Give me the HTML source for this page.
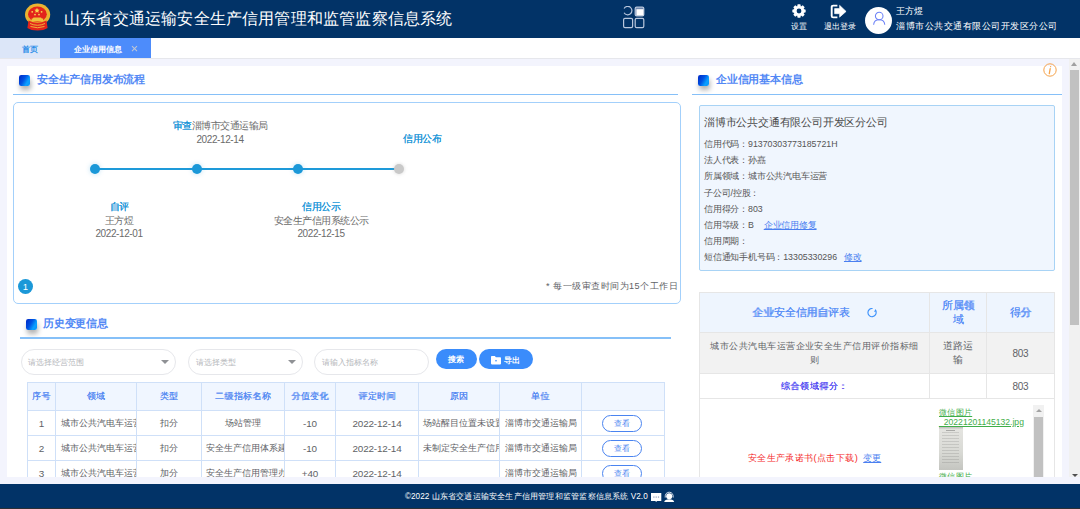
<!DOCTYPE html>
<html><head><meta charset="utf-8">
<style>
*{margin:0;padding:0;box-sizing:border-box}
html,body{width:1080px;height:509px;overflow:hidden;background:#f3f4fd;font-family:"Liberation Sans",sans-serif;color:#606266}
.a{position:absolute;white-space:nowrap}
#hdr{position:absolute;left:0;top:0;width:1080px;height:38px;background:#023367}
#tabs{position:absolute;left:0;top:38px;width:1080px;height:21px;background:#fff;border-bottom:1px solid #e6e7ec}
#ftr{position:absolute;left:0;top:484px;width:1080px;height:25px;background:#023367}
.card{position:absolute;background:#fff}
.ttl{position:absolute;font-size:11px;letter-spacing:-0.2px;color:#5288f5;line-height:12px;font-weight:bold}
.ico{position:absolute;width:11px;height:11px;border-radius:2.2px;background:linear-gradient(120deg,#0026c4 0%,#0052e2 42%,#0aa0ff 72%,#0a90f8 100%);box-shadow:1px 4px 5px rgba(0,0,0,.3)}
.uline{position:absolute;height:1.5px;background:#86c0f8}
.dot{position:absolute;width:10px;height:10px;border-radius:50%;background:#1b98d8;box-shadow:0 0 4px 1px rgba(27,150,216,.18)}
.stp{position:absolute;font-size:9.5px;letter-spacing:-0.5px;line-height:13.5px;text-align:center;width:120px;color:#6b6b6b;margin-top:0.2px}
.stp b{color:#1b96d8;font-weight:normal;text-shadow:0.4px 0 0 #1b96d8}
.stp .d{letter-spacing:-0.4px;font-size:10px}
.sel{position:absolute;height:25.5px;border:1px solid #e6e7eb;border-radius:13px;background:#fff}
.ph{position:absolute;font-size:8px;color:#b4b6ba;line-height:10px;margin-top:1px}
.arr{position:absolute;width:0;height:0;border-left:4.5px solid transparent;border-right:4.5px solid transparent;border-top:4.5px solid #8f9195}
.btn{position:absolute;height:20px;border-radius:10px;background:#3a8cfb;color:#fff;font-size:8.3px;line-height:20px;font-weight:bold}
table{border-collapse:collapse;table-layout:fixed}
#t1{position:absolute;left:27px;top:382px;width:637px}
#t1 td,#t1 th{border:1px solid #cfe0f8;font-size:9.4px;text-align:center;overflow:hidden;white-space:nowrap;color:#606266;font-weight:normal;padding:0}
#t1 th{background:#f0f6ff;color:#5288f2;font-weight:normal;text-shadow:0.35px 0 0 #5288f2;font-size:9.3px;letter-spacing:0.4px;height:28px}
#t1 td{height:25px;padding-top:1px}
#t1 td.dg{font-size:9.9px;letter-spacing:-0.15px}
.vbtn{position:relative;left:-1.5px;display:inline-block;width:40px;height:17px;border:1px solid #4a84f0;border-radius:9px;color:#4a84f0;font-size:8px;line-height:15px;vertical-align:middle}
.info{position:absolute;left:699px;top:105px;width:356px;height:166px;background:#f0f6fe;border:1px solid #a8d3f5;border-radius:2px}
.il{position:absolute;left:704px;font-size:9px;letter-spacing:-0.2px;line-height:10px;color:#555}
.lnk{color:#4a7ff0;text-decoration:underline}
.n{font-size:8.8px;letter-spacing:0}
#t2{position:absolute;left:699px;top:292px;width:355px}
#t2 td,#t2 th{border:1px solid #e6e6e6;text-align:center;padding:0;font-weight:normal;overflow:hidden}
#t2 th{background:#eef5fe;color:#5a90f7;font-size:11px;letter-spacing:-0.1px;font-weight:normal;text-shadow:0.35px 0 0 #5a90f7;line-height:13.5px}
</style></head><body>
<div id="hdr">
  <svg class="a" style="left:20px;top:0px" width="36" height="36" viewBox="0 0 36 36">
    <ellipse cx="17.6" cy="14.5" rx="12.6" ry="11" fill="#e9b431"/>
    
    <ellipse cx="17.4" cy="14.2" rx="9.4" ry="7.6" fill="#e3241b"/>
    <path d="M17 7.8 L17.8 9.6 L19.6 9.8 L18.3 11 L18.7 12.8 L17 11.9 L15.3 12.8 L15.7 11 L14.4 9.8 L16.2 9.6Z" fill="#f7d650"/>
    <circle cx="12.2" cy="11.8" r=".9" fill="#f7d650"/><circle cx="21.6" cy="11.8" r=".9" fill="#f7d650"/>
    <circle cx="15" cy="14.6" r=".9" fill="#f7d650"/><circle cx="19" cy="14.6" r=".9" fill="#f7d650"/>
    <path d="M13.5 17.4 H21 L21.8 18.6 H23.2 V21.2 H11.6 V18.6 H12.7Z" fill="#f0c23c"/>
    <path d="M8.5 20.5 Q17.5 25 26.5 20.5 L27.6 28 Q24 30.5 17.5 30.5 Q11 30.5 7.4 28Z" fill="#e3241b"/>
    <path d="M10 23.5 Q17.5 27 25 23.5 M10.5 26.5 Q17.5 29 24.5 26.5" fill="none" stroke="#f0c23c" stroke-width=".9"/>
  </svg>
  <div class="a" style="left:64px;top:8.5px;font-size:16px;letter-spacing:0.19px;line-height:20px;color:#fff">山东省交通运输安全生产信用管理和监管监察信息系统</div>
  <svg class="a" style="left:623px;top:6px" width="22" height="23" viewBox="0 0 22 23" fill="none" stroke="#b9c7dd" stroke-width="1.2">
    <path d="M1.1 6.7 A4.2 4.2 0 1 0 1.1 2.5"/>
    <rect x="12.2" y="1.2" width="8.6" height="8.6" rx="1.4" fill="#6f87ad"/>
    <rect x="13.4" y="3.2" width="7" height="6.2" fill="#fff" stroke="none"/>
    <rect x="0.6" y="12.4" width="9" height="9.2" rx="1.4"/>
    <rect x="12.2" y="12.4" width="8.6" height="9.2" rx="1.4"/>
  </svg>
  <svg class="a" style="left:791.5px;top:4.3px" width="14" height="14" viewBox="0 0 14 14"><path fill="#fff" fill-rule="evenodd" d="M5.10 2.38 L5.65 0.34 L8.35 0.34 L8.90 2.38 L8.93 2.39 L10.76 1.33 L12.67 3.24 L11.61 5.07 L11.62 5.10 L13.66 5.65 L13.66 8.35 L11.62 8.90 L11.61 8.93 L12.67 10.76 L10.76 12.67 L8.93 11.61 L8.90 11.62 L8.35 13.66 L5.65 13.66 L5.10 11.62 L5.07 11.61 L3.24 12.67 L1.33 10.76 L2.39 8.93 L2.38 8.90 L0.34 8.35 L0.34 5.65 L2.38 5.10 L2.39 5.07 L1.33 3.24 L3.24 1.33 L5.07 2.39Z M7 4.6 A2.4 2.4 0 1 0 7 9.4 A2.4 2.4 0 1 0 7 4.6Z"/></svg>
  <div class="a" style="left:791px;top:22px;font-size:8.2px;line-height:10px;color:#fff">设置</div>
  <svg class="a" style="left:830px;top:4px" width="17" height="15" viewBox="0 0 17 15">
    <path d="M7.4 1.6 H3.2 Q1.7 1.6 1.7 3.1 V11.9 Q1.7 13.4 3.2 13.4 H7.4" fill="none" stroke="#fff" stroke-width="1.9"/>
    <path d="M4.6 4.6 H9.6 V1.3 L16.1 7.4 L9.6 13.2 V9.7 H4.6Z" fill="#fff" stroke="#fff" stroke-width=".6" stroke-linejoin="round"/>
  </svg>
  <div class="a" style="left:824px;top:22px;font-size:8.2px;line-height:10px;color:#fff">退出登录</div>
  <div class="a" style="left:865px;top:7px;width:27px;height:27px;border-radius:50%;background:#fff"></div>
  <svg class="a" style="left:871px;top:11px" width="16" height="16" viewBox="0 0 16 16" fill="none" stroke="#6c82f7" stroke-width="1.05">
    <circle cx="8.2" cy="5" r="3.8"/>
    <path d="M2.6 13.7 Q3.1 8.8 8.2 8.8 Q13.3 8.8 13.8 13.7"/>
  </svg>
  <div class="a" style="left:896px;top:5px;font-size:9.4px;line-height:11px;color:#fff">王方煜</div>
  <div class="a" style="left:896px;top:20px;font-size:9.4px;letter-spacing:0.5px;line-height:11px;color:#fff">淄博市公共交通有限公司开发区分公司</div>
</div>
<div id="tabs">
  <div class="a" style="left:0;top:0;width:60px;height:20px;background:#dce6f8"></div>
  <div class="a" style="left:22px;top:7px;font-size:8px;line-height:10px;color:#2a8ce8;font-weight:bold">首页</div>
  <div class="a" style="left:60px;top:0;width:91px;height:20px;background:#4d8cfb"></div>
  <div class="a" style="left:74px;top:7px;font-size:8px;line-height:10px;color:#fff;font-weight:bold">企业信用信息</div>
  <svg class="a" style="left:131px;top:7px" width="7" height="7" viewBox="0 0 7 7"><path d="M1 1.2 L6 6.2 M6 1.2 L1 6.2" stroke="#bfc6d4" stroke-width="1.05"/></svg>
</div>
<div class="card" style="left:7px;top:65.5px;width:1055px;height:411.5px"></div>

<!-- left section 1 -->
<div class="ico" style="left:19px;top:75px"></div>
<div class="ttl" style="left:37px;top:73px">安全生产信用发布流程</div>
<div class="uline" style="left:13px;top:93.5px;width:665px"></div>
<div class="a" style="left:13.3px;top:101.5px;width:667.7px;height:202px;border:1.9px solid #a3d0fb;border-radius:5px"></div>
<div class="a" style="left:95px;top:168.4px;width:303px;height:1.8px;background:#1e9ad9"></div>
<div class="dot" style="left:90px;top:164.3px"></div>
<div class="dot" style="left:191.5px;top:164.3px"></div>
<div class="dot" style="left:292.7px;top:164.3px"></div>
<div class="dot" style="left:393.7px;top:164.3px;background:#c9c9c9;box-shadow:0 0 3px 1px rgba(150,150,150,.2)"></div>
<div class="stp" style="left:160px;top:119px"><b>审查</b>淄博市交通运输局<br><span class="d">2022-12-14</span></div>
<div class="stp" style="left:362px;top:132px"><b>信用公布</b></div>
<div class="stp" style="left:59px;top:200px"><b>自评</b><br>王方煜<br><span class="d">2022-12-01</span></div>
<div class="stp" style="left:261px;top:200px"><b>信用公示</b><br>安全生产信用系统公示<br><span class="d">2022-12-15</span></div>
<div class="a" style="left:18px;top:278.8px;width:15px;height:15px;border-radius:50%;background:#1b98d8;color:#fff;font-size:9.5px;line-height:15px;text-align:center">1</div>
<div class="a" style="left:546px;top:281px;font-size:9.1px;letter-spacing:0.5px;line-height:11px;color:#606266">* 每一级审查时间为15个工作日</div>

<!-- left section 2 -->
<div class="ico" style="left:26px;top:318.5px"></div>
<div class="ttl" style="left:43px;top:317px">历史变更信息</div>
<div class="uline" style="left:20px;top:337px;width:651px"></div>
<div class="sel" style="left:21px;top:349px;width:155px"></div>
<div class="ph" style="left:28px;top:357px">请选择经营范围</div>
<div class="arr" style="left:161.2px;top:359.8px"></div>
<div class="sel" style="left:188px;top:349px;width:115px"></div>
<div class="ph" style="left:196px;top:357px">请选择类型</div>
<div class="arr" style="left:287.7px;top:359.8px"></div>
<div class="sel" style="left:314px;top:349px;width:115px"></div>
<div class="ph" style="left:322px;top:357px">请输入指标名称</div>
<div class="btn" style="left:436px;top:349px;width:41px;text-align:center;text-indent:-1px">搜索</div>
<div class="btn" style="left:479px;top:349px;width:54px"></div>
<svg class="a" style="left:491.3px;top:356.3px" width="10" height="8.4" viewBox="0 0 10 8.4"><path d="M0 0.8 Q0 0 0.8 0 H3.8 L4.9 1.3 H9.3 Q10 1.3 10 2 V7.6 Q10 8.4 9.3 8.4 H0.8 Q0 8.4 0 7.6Z" fill="#fff"/><path d="M5 3.7 L6 4.7 L5 5.7 L4 4.7Z" fill="#3a8cfb"/></svg>
<div class="a" style="left:504px;top:354.5px;font-size:8.3px;letter-spacing:0.3px;line-height:10px;color:#fff;font-weight:bold">导出</div>

<table id="t1">
<colgroup><col style="width:28px"><col style="width:81px"><col style="width:65px"><col style="width:83px"><col style="width:51px"><col style="width:83px"><col style="width:81px"><col style="width:82px"><col style="width:83px"></colgroup>
<tr><th>序号</th><th>领域</th><th>类型</th><th>二级指标名称</th><th>分值变化</th><th>评定时间</th><th>原因</th><th>单位</th><th></th></tr>
<tr><td class="dg">1</td><td style="text-align:left;padding-left:5px">城市公共汽电车运营</td><td>扣分</td><td>场站管理</td><td class="dg">-10</td><td class="dg">2022-12-14</td><td style="text-align:left;padding-left:4px">场站醒目位置未设置</td><td>淄博市交通运输局</td><td><span class="vbtn">查看</span></td></tr>
<tr><td class="dg">2</td><td style="text-align:left;padding-left:5px">城市公共汽电车运营</td><td>扣分</td><td style="text-align:left;padding-left:4px">安全生产信用体系建设</td><td class="dg">-10</td><td class="dg">2022-12-14</td><td style="text-align:left;padding-left:4px">未制定安全生产信用</td><td>淄博市交通运输局</td><td><span class="vbtn">查看</span></td></tr>
<tr><td class="dg">3</td><td style="text-align:left;padding-left:5px">城市公共汽电车运营</td><td>加分</td><td style="text-align:left;padding-left:4px">安全生产信用管理办法</td><td class="dg">+40</td><td class="dg">2022-12-14</td><td></td><td>淄博市交通运输局</td><td><span class="vbtn">查看</span></td></tr>
</table>

<!-- right section -->
<div class="ico" style="left:698px;top:75px"></div>
<div class="ttl" style="left:716px;top:73px">企业信用基本信息</div>
<div class="uline" style="left:692px;top:93.5px;width:370px"></div>
<svg class="a" style="left:1043px;top:63px" width="14" height="14" viewBox="0 0 14 14"><circle cx="7" cy="7" r="6.2" fill="none" stroke="#f5a24a" stroke-width="1"/><path d="M7.6 3.6 v.1 M7.2 5.6 L6.3 10.6" stroke="#f5a24a" stroke-width="1.3" stroke-linecap="round"/></svg>
<div class="info"></div>
<div class="a" style="left:704px;top:116px;font-size:11px;letter-spacing:-0.2px;line-height:13px;color:#4a4a4a">淄博市公共交通有限公司开发区分公司</div>
<div class="il" style="top:139px">信用代码：<span class="n">91370303773185721H</span></div>
<div class="il" style="top:155px">法人代表：孙嚞</div>
<div class="il" style="top:171px">所属领域：城市公共汽电车运营</div>
<div class="il" style="top:188px">子公司/控股：</div>
<div class="il" style="top:204px">信用得分：<span class="n">803</span></div>
<div class="il" style="top:220px">信用等级：<span class="n">B</span> &nbsp;&nbsp;&nbsp; <span class="lnk" style="margin-left:-1.7px">企业信用修复</span></div>
<div class="il" style="top:236px">信用周期：</div>
<div class="il" style="top:252px">短信通知手机号码：<span class="n">13305330296</span> &nbsp;&nbsp; <span class="lnk" style="margin-left:-2.3px">修改</span></div>

<table id="t2">
<colgroup><col style="width:230px"><col style="width:57px"><col style="width:68px"></colgroup>
<tr style="height:40px"><th><span style="letter-spacing:-0.2px">企业安全信用自评表</span> <span style="display:inline-block;width:24px"></span></th><th>所属领<br>域</th><th>得分</th></tr>
<tr style="height:41px;background:#f2f2f2"><td style="font-size:9.1px;letter-spacing:0.46px;line-height:14px;color:#606266">城市公共汽电车运营企业安全生产信用评价指标细<br>则</td><td style="font-size:9.5px;line-height:14px;color:#606266">道路运<br>输</td><td style="font-size:10px;letter-spacing:-0.3px;color:#606266">803</td></tr>
<tr style="height:25px"><td style="font-size:9px;letter-spacing:0.6px;color:#5048f2;text-shadow:0.25px 0 0 #5048f2">综合领域得分：</td><td></td><td style="font-size:10px;letter-spacing:-0.3px;color:#606266">803</td></tr>
<tr style="height:120px"><td style="font-size:9.2px;color:#f52a2a"><span style="letter-spacing:0.4px">安全生产承诺书(点击下载)</span> &nbsp;<span class="lnk">变更</span></td><td colspan="2"></td></tr>
</table>
<svg class="a" style="left:867px;top:307.7px" width="10" height="10" viewBox="0 0 10 10"><path d="M5.6 0.55 A4.1 4.1 0 1 0 9 3.6" fill="none" stroke="#3d92fb" stroke-width="1.15"/><path d="M8.3 0.9 L10 3.4 L7.2 3.9Z" fill="#3d92fb"/></svg>

<div class="a" style="left:929px;top:399px;width:125px;height:78px;background:#fff;overflow:hidden">
  <div class="a" style="left:10px;top:7.5px;font-size:8.6px;line-height:10.5px;color:#3fae49;text-decoration:underline"><span style="font-size:8.3px;letter-spacing:0.3px">微信图片</span><br>_20221201145132.jpg</div>
  <div class="a" style="left:10px;top:28px;width:24px;height:43px;background:linear-gradient(180deg,#bcbcb8 0,#e4e4e0 6%,#d8d9d4 60%,#c4c5c0 100%)">
    <div class="a" style="left:3px;top:5px;width:17px;height:33px;background:repeating-linear-gradient(180deg,rgba(90,90,90,.18) 0,rgba(90,90,90,.18) 1px,transparent 1px,transparent 3px)"></div>
    <div class="a" style="left:7px;top:3px;width:9px;height:1px;background:rgba(80,80,80,.4)"></div>
  </div>
  <div class="a" style="left:10px;top:72px;font-size:8.3px;letter-spacing:0.3px;line-height:10.5px;color:#3fae49;text-decoration:underline">微信图片</div>
  <div class="a" style="left:104px;top:6px;width:11px;height:72px;background:#f1f1f1"></div>
  <div class="a" style="left:105px;top:18px;width:9px;height:60px;background:#c1c1c1"></div>
  <div class="a" style="left:106.5px;top:10px;width:0;height:0;border-left:3px solid transparent;border-right:3px solid transparent;border-bottom:3px solid #a3a3a3"></div>
</div>
<div class="a" style="left:0;top:477px;width:1080px;height:7px;background:#f3f4fd"></div>
<!-- page scrollbar -->
<div class="a" style="left:1069px;top:59px;width:11px;height:418px;background:#f1f1f1"></div>
<div class="a" style="left:1070px;top:70px;width:9px;height:255px;background:#c1c1c1"></div>
<div class="a" style="left:1071px;top:62px;width:0;height:0;border-left:3.5px solid transparent;border-right:3.5px solid transparent;border-bottom:4px solid #a0a0a0"></div>
<div class="a" style="left:1071.5px;top:473.5px;width:0;height:0;border-left:3px solid transparent;border-right:3px solid transparent;border-top:3.5px solid #505050"></div>

<div id="ftr">
  <div class="a" style="left:405px;top:8px;font-size:8.2px;line-height:10px;color:#fff">©2022 <span style="letter-spacing:0.21px">山东省交通运输安全生产信用管理和监管监察信息系统</span> V2.0</div>
  <svg class="a" style="left:651px;top:9px" width="11" height="10" viewBox="0 0 11 10"><path d="M0 0H10.3V7.9H6L5.1 9.1L4.3 7.9H0Z" fill="#fff"/><rect x="2.3" y="3.3" width="1.2" height="1.6" fill="#a9b4c9"/><rect x="4.6" y="3.3" width="1.2" height="1.6" fill="#a9b4c9"/><rect x="6.9" y="3.3" width="1.2" height="1.6" fill="#a9b4c9"/></svg>
  <svg class="a" style="left:664px;top:7px" width="11" height="12" viewBox="0 0 11 12"><circle cx="5.2" cy="5.3" r="3" fill="#fff"/><path d="M1.2 6.6 Q0.9 1.4 5.2 1.2 Q9.5 1.4 9.2 6.6" fill="none" stroke="#dfe6f2" stroke-width=".9"/><path d="M0.2 11 Q0.8 8.3 5.2 8.3 Q9.6 8.3 10.2 11Z" fill="#fff"/></svg>
  <div class="a" style="left:0;top:23.5px;width:1080px;height:1.5px;background:#2b2f36"></div>
</div>
</body></html>
